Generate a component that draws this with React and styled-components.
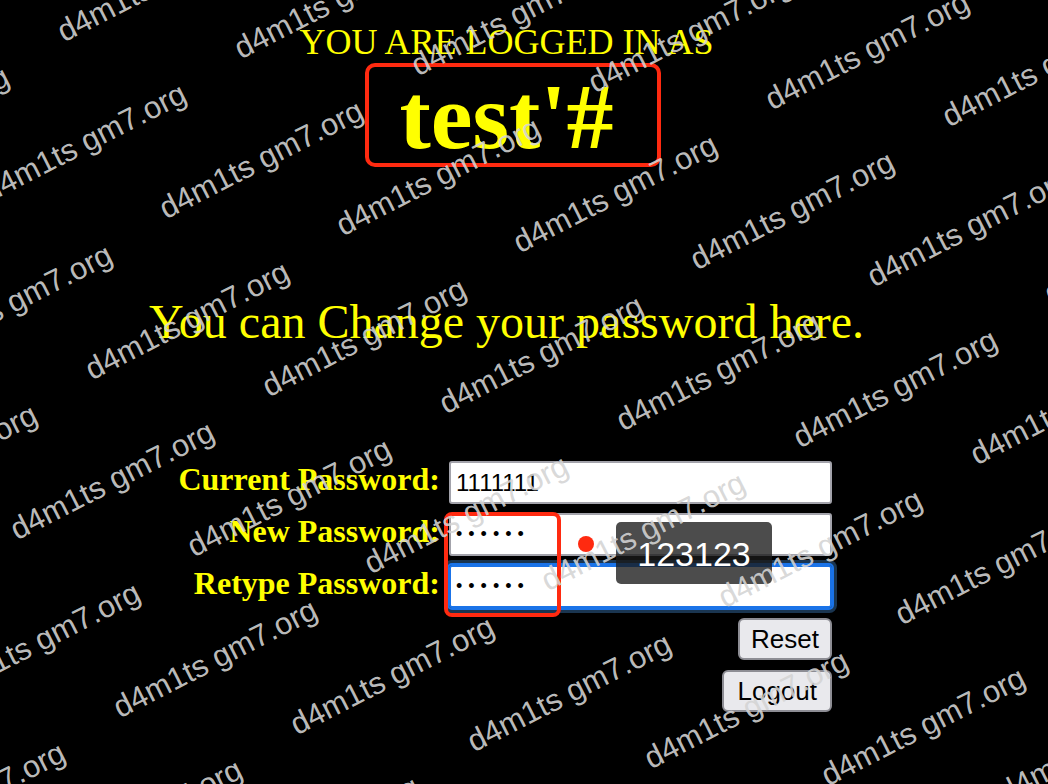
import styled, { createGlobalStyle } from 'styled-components';

const GlobalStyle = createGlobalStyle`
	html, body {
		margin: 0;
		background: #000;
	}
`;

// watermark lattice, measured from the screenshot
const stamps = [];
for (let r = -2; r <= 6; r++) {
	for (let c = -2; c <= 8; c++) {
		const x = -10 + 177 * c - 74.5 * r;
		const y = 202 + 17 * c + 160.5 * r;
		if (x > -260 && x < 1080 && y > -20 && y < 920) {
			stamps.push({ key: `${r}_${c}`, x, y });
		}
	}
}

export default function App() {
	return (
		<>
			<GlobalStyle />
			<Page>
				<Column>
					<Title>YOU ARE LOGGED IN AS</Title>
					<UserName>test'#</UserName>
					<Subtitle>You can Change your password here.</Subtitle>
					<Form onSubmit={(e) => e.preventDefault()}>
						<Label>Current Password:</Label>
						<Field type="text" defaultValue="1111111" />
						<Label>New Password:</Label>
						<Field type="password" defaultValue="123123" $secret />
						<Label>Retype Password:</Label>
						<Field type="password" defaultValue="123123" $secret $focused />
						<Buttons>
							<Button type="reset">Reset</Button>
							<Button type="button" $wide>Logout</Button>
						</Buttons>
					</Form>
				</Column>

				<NameMark />
				<FieldMark />
				<Dot />
				<Tooltip>123123</Tooltip>

				<Watermark>
					{stamps.map((s) => (
						<Stamp key={s.key} style={{ left: s.x - 1, top: s.y - 26 }}>
							d4m1ts gm7.org
						</Stamp>
					))}
				</Watermark>
			</Page>
		</>
	);
}

const Page = styled.div`
	position: relative;
	width: 1048px;
	height: 784px;
	overflow: hidden;
	background: #000;
	color: #ffff00;
	font-family: 'Liberation Serif', 'Times New Roman', serif;
`;

const Column = styled.main`
	width: 1013px;
	padding-top: 22px;
	display: flex;
	flex-direction: column;
	align-items: center;
`;

const Title = styled.h3`
	margin: 0;
	font-size: 36px;
	font-weight: 400;
	line-height: 41px;
`;

const UserName = styled.h1`
	margin: 6px 0 0;
	font-size: 94px;
	font-weight: 700;
	line-height: 94px;
`;

const Subtitle = styled.h2`
	margin: 131px 0 0;
	font-size: 48px;
	font-weight: 400;
	line-height: 55px;
`;

const Form = styled.form`
	align-self: stretch;
	margin-top: 112px;
	display: grid;
	grid-template-columns: 440px 383px;
	column-gap: 9px;
	row-gap: 9px;
`;

const Label = styled.label`
	align-self: start;
	text-align: right;
	white-space: nowrap;
	font-size: 32px;
	font-weight: 700;
	line-height: 37px;
`;

const Field = styled.input`
	box-sizing: border-box;
	width: 383px;
	height: 43px;
	margin: 0;
	padding: 0 5px;
	background: #fff;
	color: #000;
	font-family: 'Liberation Sans', Arial, sans-serif;
	font-size: ${(p) => (p.$secret ? '18px' : '24px')};
	letter-spacing: ${(p) => (p.$secret ? '6px' : 'normal')};
	border: 2px solid ${(p) => (p.$focused ? '#1a73e8' : '#a3a3ab')};
	border-radius: 3px;
	outline: ${(p) => (p.$focused ? '2px solid #1a73e8' : 'none')};
	box-shadow: ${(p) => (p.$focused ? '0 0 0 5px #1a3550' : 'none')};
`;

const Buttons = styled.div`
	grid-column: 2;
	display: flex;
	flex-direction: column;
	align-items: flex-end;
	gap: 10px;
	margin-top: 1px;
`;

const Button = styled.button`
	box-sizing: border-box;
	height: 42px;
	padding: 0 ${(p) => (p.$wide ? '13px' : '11px')};
	font-family: 'Liberation Sans', Arial, sans-serif;
	font-size: 26px;
	color: #000;
	background: #e9e9ed;
	border: 2px solid #8d8d94;
	border-radius: 6px;
`;

const NameMark = styled.div`
	position: absolute;
	left: 365px;
	top: 63px;
	width: 296px;
	height: 104px;
	box-sizing: border-box;
	border: 4.5px solid #ff2a10;
	border-radius: 10px;
`;

const FieldMark = styled.div`
	position: absolute;
	left: 444px;
	top: 512px;
	width: 117px;
	height: 105px;
	box-sizing: border-box;
	border: 4px solid #ff2a10;
	border-radius: 8px;
`;

const Dot = styled.span`
	position: absolute;
	left: 578px;
	top: 536px;
	width: 16px;
	height: 16px;
	border-radius: 50%;
	background: #ff2a10;
`;

const Tooltip = styled.div`
	position: absolute;
	left: 616px;
	top: 522px;
	width: 156px;
	height: 62px;
	box-sizing: border-box;
	padding-top: 3px;
	display: flex;
	align-items: center;
	justify-content: center;
	border-radius: 5px;
	background: rgba(25, 25, 25, 0.78);
	color: #fff;
	font-family: 'Liberation Sans', Arial, sans-serif;
	font-size: 34px;
`;

const Watermark = styled.div`
	position: absolute;
	inset: 0;
	overflow: hidden;
	pointer-events: none;
	z-index: 10;
`;

const Stamp = styled.span`
	position: absolute;
	font-family: 'Liberation Sans', Arial, sans-serif;
	font-size: 31px;
	line-height: 1;
	white-space: nowrap;
	color: rgba(212, 212, 212, 0.9);
	transform-origin: 1px 26px;
	transform: rotate(-27deg);
`;
